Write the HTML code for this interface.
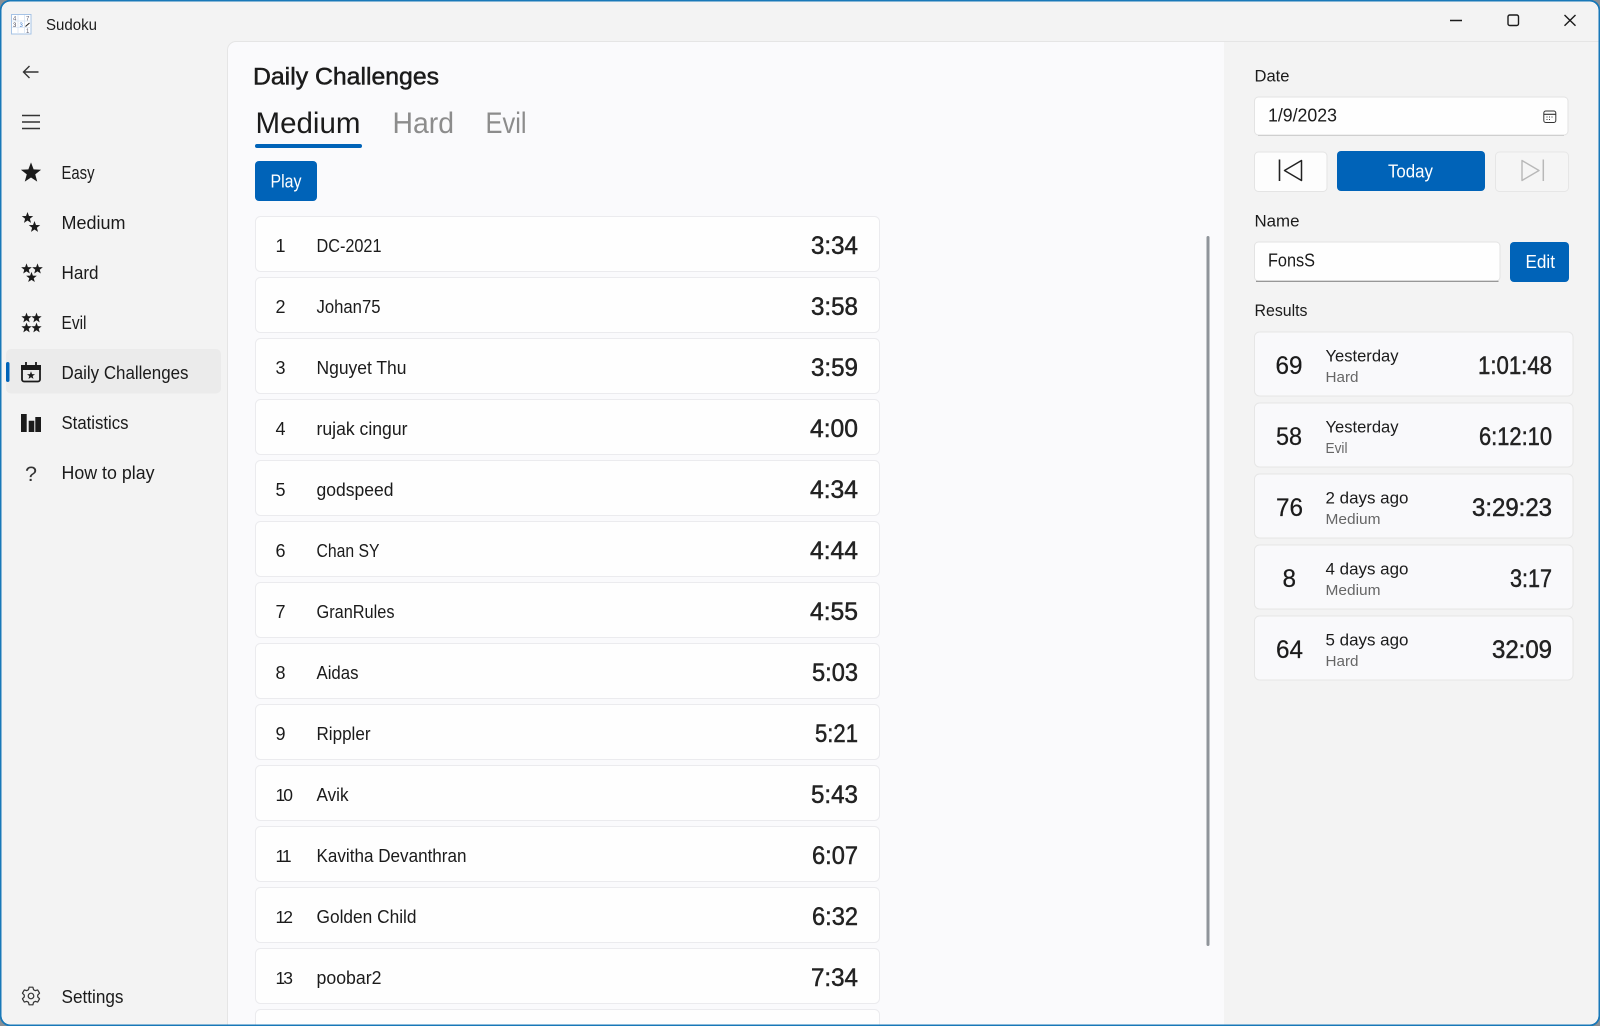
<!DOCTYPE html>
<html lang="en"><head><meta charset="utf-8"><title>Sudoku</title>
<style>
html,body{margin:0;padding:0;width:1600px;height:1026px;overflow:hidden;background:#8a8f94}
svg{display:block}
text{font-family:"Liberation Sans",sans-serif;fill:#1b1b1b;white-space:pre}
.n{font-size:18px}
.d{font-size:17.5px;letter-spacing:-2px}
.t{font-size:25px;fill:#222;stroke:#222;stroke-width:.5}
.h{font-size:25px;stroke:#1b1b1b;stroke-width:.25}
.s{font-size:17px}
.g{font-size:15px;fill:#666}
.w{fill:#fff}
.r{fill:#fefefe;stroke:#ebebee;stroke-width:1}
.c{fill:#f9f9fb;stroke:#e6e6e6;stroke-width:1}
</style></head><body>
<svg width="1600" height="1026" viewBox="0 0 1600 1026" xmlns="http://www.w3.org/2000/svg">
<defs>
<path id="st" d="M0-10L2.47-3.4 9.51-3.09 3.99 1.3 5.88 8.09 0 4.2-5.88 8.09-3.99 1.3-9.51-3.09-2.47-3.4Z"/>
<clipPath id="win"><rect x="1" y="1" width="1598" height="1024" rx="9"/></clipPath>
</defs>
<rect x="0.7" y="0.7" width="1598.6" height="1024.6" rx="9.5" fill="#f3f3f3" stroke="#1878b8" stroke-width="1.6"/>
<g clip-path="url(#win)">
<!-- content -->
<path d="M1224 41.5H236a8.5 8.5 0 0 0-8.5 8.5V1026H1224Z" fill="#fafafc"/>
<path d="M1600 41.5H236a8.5 8.5 0 0 0-8.5 8.5V1026" fill="none" stroke="#e5e5e5"/>
<!-- rows -->
<g>
<rect class="r" x="255.5" y="216.5" width="624" height="55" rx="5"/>
<rect class="r" x="255.5" y="277.5" width="624" height="55" rx="5"/>
<rect class="r" x="255.5" y="338.5" width="624" height="55" rx="5"/>
<rect class="r" x="255.5" y="399.5" width="624" height="55" rx="5"/>
<rect class="r" x="255.5" y="460.5" width="624" height="55" rx="5"/>
<rect class="r" x="255.5" y="521.5" width="624" height="55" rx="5"/>
<rect class="r" x="255.5" y="582.5" width="624" height="55" rx="5"/>
<rect class="r" x="255.5" y="643.5" width="624" height="55" rx="5"/>
<rect class="r" x="255.5" y="704.5" width="624" height="55" rx="5"/>
<rect class="r" x="255.5" y="765.5" width="624" height="55" rx="5"/>
<rect class="r" x="255.5" y="826.5" width="624" height="55" rx="5"/>
<rect class="r" x="255.5" y="887.5" width="624" height="55" rx="5"/>
<rect class="r" x="255.5" y="948.5" width="624" height="55" rx="5"/>
<rect class="r" x="255.5" y="1009.5" width="624" height="55" rx="5"/>
</g>
<g>
<text class="n" x="275.5" y="252">1</text><text class="n" x="316.5" y="252" textLength="65" lengthAdjust="spacingAndGlyphs">DC-2021</text>
<text class="n" x="275.5" y="313">2</text><text class="n" x="316.5" y="313" textLength="64" lengthAdjust="spacingAndGlyphs">Johan75</text>
<text class="n" x="275.5" y="374">3</text><text class="n" x="316.5" y="374" textLength="90" lengthAdjust="spacingAndGlyphs">Nguyet Thu</text>
<text class="n" x="275.5" y="435">4</text><text class="n" x="316.5" y="435" textLength="91" lengthAdjust="spacingAndGlyphs">rujak cingur</text>
<text class="n" x="275.5" y="496">5</text><text class="n" x="316.5" y="496" textLength="77" lengthAdjust="spacingAndGlyphs">godspeed</text>
<text class="n" x="275.5" y="557">6</text><text class="n" x="316.5" y="557" textLength="63" lengthAdjust="spacingAndGlyphs">Chan SY</text>
<text class="n" x="275.5" y="618">7</text><text class="n" x="316.5" y="618" textLength="78" lengthAdjust="spacingAndGlyphs">GranRules</text>
<text class="n" x="275.5" y="679">8</text><text class="n" x="316.5" y="679" textLength="42" lengthAdjust="spacingAndGlyphs">Aidas</text>
<text class="n" x="275.5" y="740">9</text><text class="n" x="316.5" y="740" textLength="54" lengthAdjust="spacingAndGlyphs">Rippler</text>
<text class="d" x="275.5" y="801">10</text><text class="n" x="316.5" y="801" textLength="32" lengthAdjust="spacingAndGlyphs">Avik</text>
<text class="d" x="275.5" y="862">11</text><text class="n" x="316.5" y="862" textLength="150" lengthAdjust="spacingAndGlyphs">Kavitha Devanthran</text>
<text class="d" x="275.5" y="923">12</text><text class="n" x="316.5" y="923" textLength="100" lengthAdjust="spacingAndGlyphs">Golden Child</text>
<text class="d" x="275.5" y="984">13</text><text class="n" x="316.5" y="984" textLength="65" lengthAdjust="spacingAndGlyphs">poobar2</text>
</g>
<g>
<text class="t" x="811" y="254" textLength="47" lengthAdjust="spacingAndGlyphs">3:34</text>
<text class="t" x="811" y="315" textLength="47" lengthAdjust="spacingAndGlyphs">3:58</text>
<text class="t" x="811" y="376" textLength="47" lengthAdjust="spacingAndGlyphs">3:59</text>
<text class="t" x="810" y="437" textLength="48" lengthAdjust="spacingAndGlyphs">4:00</text>
<text class="t" x="810" y="498" textLength="48" lengthAdjust="spacingAndGlyphs">4:34</text>
<text class="t" x="810" y="559" textLength="48" lengthAdjust="spacingAndGlyphs">4:44</text>
<text class="t" x="810" y="620" textLength="48" lengthAdjust="spacingAndGlyphs">4:55</text>
<text class="t" x="812" y="681" textLength="46" lengthAdjust="spacingAndGlyphs">5:03</text>
<text class="t" x="815" y="742" textLength="43" lengthAdjust="spacingAndGlyphs">5:21</text>
<text class="t" x="811" y="803" textLength="47" lengthAdjust="spacingAndGlyphs">5:43</text>
<text class="t" x="812" y="864" textLength="46" lengthAdjust="spacingAndGlyphs">6:07</text>
<text class="t" x="812" y="925" textLength="46" lengthAdjust="spacingAndGlyphs">6:32</text>
<text class="t" x="811" y="986" textLength="47" lengthAdjust="spacingAndGlyphs">7:34</text>
</g>
<!-- header -->
<text x="253" y="84.5" font-size="24" style="stroke:#1b1b1b;stroke-width:.5" textLength="186" lengthAdjust="spacingAndGlyphs">Daily Challenges</text>
<text x="255.5" y="133" font-size="30" textLength="105" lengthAdjust="spacingAndGlyphs">Medium</text>
<text x="392.5" y="133" font-size="30" style="fill:#8c8c8c" textLength="61.5" lengthAdjust="spacingAndGlyphs">Hard</text>
<text x="485.5" y="133" font-size="30" style="fill:#8c8c8c" textLength="41" lengthAdjust="spacingAndGlyphs">Evil</text>
<rect x="255" y="144" width="107" height="4" rx="2" fill="#0063b8"/>
<rect x="255" y="161" width="62" height="40" rx="4" fill="#0063b8"/>
<text class="n w" x="270.5" y="187.5" textLength="31" lengthAdjust="spacingAndGlyphs">Play</text>
<!-- scrollbar -->
<rect x="1206.5" y="236" width="3" height="710" rx="1.5" fill="#8f949a"/>
<!-- sidebar -->
<path d="M38.5 72H23.5M29.5 66L23.5 72L29.5 78" fill="none" stroke="#333" stroke-width="1.4"/>
<path d="M22 115.5H40M22 122H40M22 128.5H40" stroke="#333" stroke-width="1.4"/>
<use href="#st" transform="translate(31 173) scale(1.06)" fill="#1b1b1b"/>
<use href="#st" transform="translate(27.5 218) scale(.6)" fill="#1b1b1b"/>
<use href="#st" transform="translate(34.5 227) scale(.6)" fill="#1b1b1b"/>
<use href="#st" transform="translate(26.5 269) scale(.56)" fill="#1b1b1b"/>
<use href="#st" transform="translate(37.5 269) scale(.56)" fill="#1b1b1b"/>
<use href="#st" transform="translate(31.5 277.5) scale(.56)" fill="#1b1b1b"/>
<use href="#st" transform="translate(26.5 318) scale(.54)" fill="#1b1b1b"/>
<use href="#st" transform="translate(36.5 318) scale(.54)" fill="#1b1b1b"/>
<use href="#st" transform="translate(26.5 328) scale(.54)" fill="#1b1b1b"/>
<use href="#st" transform="translate(36.5 328) scale(.54)" fill="#1b1b1b"/>
<rect x="6" y="349" width="215" height="44.5" rx="5" fill="#ebebeb"/>
<rect x="6" y="362" width="3.5" height="20" rx="1.75" fill="#0063b8"/>
<rect x="22" y="366" width="18" height="15.5" rx="2" fill="none" stroke="#1b1b1b" stroke-width="1.8"/>
<rect x="21" y="365" width="20" height="5" fill="#1b1b1b"/>
<path d="M26 362V366M36 362V366" stroke="#1b1b1b" stroke-width="1.8"/>
<use href="#st" transform="translate(31 375.5) scale(.42)" fill="#1b1b1b"/>
<path d="M21 414h5.7v18H21ZM28.7 420.7h5.6V432h-5.6ZM35.300 417H41v15h-5.7Z" fill="#1b1b1b"/>
<text x="25" y="481" font-size="21" style="fill:#333" textLength="12" lengthAdjust="spacingAndGlyphs">?</text>
<g transform="translate(31 996)" fill="none" stroke="#333" stroke-width="1.2" stroke-linejoin="round">
<path d="M-2.55-6.3L-1.87-8.8 1.87-8.8 2.55-6.3 4.19-5.36 6.69-6.02 8.56-2.78 6.73-.95 6.73 .95 8.56 2.78 6.69 6.02 4.19 5.36 2.55 6.3 1.87 8.8-1.87 8.8-2.55 6.3-4.19 5.36-6.69 6.02-8.56 2.78-6.73 .95-6.73-.95-8.56-2.78-6.69-6.02-4.19-5.36Z"/>
<circle r="2.8"/>
</g>
<text class="n" x="61.5" y="179" textLength="33" lengthAdjust="spacingAndGlyphs">Easy</text>
<text class="n" x="61.5" y="229" textLength="64" lengthAdjust="spacingAndGlyphs">Medium</text>
<text class="n" x="61.5" y="279" textLength="37" lengthAdjust="spacingAndGlyphs">Hard</text>
<text class="n" x="61.5" y="329" textLength="25" lengthAdjust="spacingAndGlyphs">Evil</text>
<text class="n" x="61.5" y="379" textLength="127" lengthAdjust="spacingAndGlyphs">Daily Challenges</text>
<text class="n" x="61.5" y="429" textLength="67" lengthAdjust="spacingAndGlyphs">Statistics</text>
<text class="n" x="61.5" y="479" textLength="93" lengthAdjust="spacingAndGlyphs">How to play</text>
<text class="n" x="61.5" y="1003" textLength="62" lengthAdjust="spacingAndGlyphs">Settings</text>
<!-- title bar -->
<rect x="11.5" y="14.5" width="19.5" height="19.5" fill="#fff" stroke="#a6c3e6"/>
<path d="M18 15V34M24.5 15V34M12 21H31M12 27.5H31" stroke="#d9e5f4" stroke-width=".8"/>
<text x="13" y="20.5" font-size="6" style="fill:#667">4</text>
<text x="26" y="20.5" font-size="6" style="fill:#667">7</text>
<text x="13" y="27" font-size="6" style="fill:#445">3</text>
<text x="19.5" y="27" font-size="6" style="fill:#3f7fd0">3</text>
<path d="M25.5 26.5L29.5 23" stroke="#222" stroke-width="1"/>
<text x="26" y="33" font-size="6" style="fill:#667">1</text>
<text x="46" y="30" font-size="15.5" textLength="51" lengthAdjust="spacingAndGlyphs">Sudoku</text>
<path d="M1450 20.5H1462" stroke="#1b1b1b" stroke-width="1.4"/>
<rect x="1508" y="15" width="10.5" height="10.5" rx="1.8" fill="none" stroke="#1b1b1b" stroke-width="1.4"/>
<path d="M1564.5 15L1575.5 25.8M1575.5 15L1564.500 25.8" stroke="#1b1b1b" stroke-width="1.4"/>
<!-- right panel -->
<text class="s" x="1254.5" y="81.5" textLength="35" lengthAdjust="spacingAndGlyphs">Date</text>
<rect class="r" x="1254.5" y="97" width="313.5" height="38" rx="4" style="stroke:#e3e3e3"/>
<path d="M1258 135.5H1564" stroke="#cfcfcf"/>
<text class="n" x="1268" y="121.5" textLength="69" lengthAdjust="spacingAndGlyphs">1/9/2023</text>
<rect x="1543.8" y="111" width="12" height="11.5" rx="2" fill="none" stroke="#333" stroke-width="1"/>
<path d="M1544 114.3H1555.5" stroke="#333" stroke-width="1.2"/>
<path d="M1546.5 117h1M1549 117h1M1551.5 117h1M1546.5 119.5h1M1549 119.5h1" stroke="#333" stroke-width="1"/>
<rect x="1254.5" y="152" width="72.5" height="39.5" rx="4" fill="#fdfdfd" stroke="#e4e4e4"/>
<path d="M1279.5 159.5V181" stroke="#222" stroke-width="1.6"/>
<path d="M1301.5 160.5L1284.5 170.5L1301.5 180.5Z" fill="none" stroke="#222" stroke-width="1.5" stroke-linejoin="round"/>
<rect x="1337" y="151" width="148" height="40" rx="4" fill="#0063b8"/>
<text class="n w" x="1388" y="177.5" textLength="45" lengthAdjust="spacingAndGlyphs">Today</text>
<rect x="1495.5" y="152" width="73" height="39.5" rx="4" fill="#f5f5f5" stroke="#e6e6e6"/>
<path d="M1543.3 159.5V181" stroke="#b8b8b8" stroke-width="1.5"/>
<path d="M1522 160.5L1539 170.5L1522 180.5Z" fill="none" stroke="#b8b8b8" stroke-width="1.4" stroke-linejoin="round"/>
<text class="s" x="1254.5" y="226.5" textLength="45" lengthAdjust="spacingAndGlyphs">Name</text>
<rect class="r" x="1254.5" y="242" width="245.5" height="39" rx="4" style="stroke:#e3e3e3"/>
<path d="M1256 281.3H1498.5" stroke="#8a8a8a" stroke-width="1.2"/>
<text class="n" x="1268" y="266.5" textLength="47" lengthAdjust="spacingAndGlyphs">FonsS</text>
<rect x="1510" y="242" width="59" height="40" rx="4" fill="#0063b8"/>
<text class="n w" x="1525.5" y="268" textLength="29.5" lengthAdjust="spacingAndGlyphs">Edit</text>
<text class="s" x="1254.5" y="316" textLength="53" lengthAdjust="spacingAndGlyphs">Results</text>
<!-- results -->
<rect class="c" x="1254.5" y="332" width="318.5" height="64" rx="5"/>
<rect class="c" x="1254.5" y="403" width="318.5" height="64" rx="5"/>
<rect class="c" x="1254.5" y="474" width="318.5" height="64" rx="5"/>
<rect class="c" x="1254.5" y="545" width="318.5" height="64" rx="5"/>
<rect class="c" x="1254.5" y="616" width="318.5" height="64" rx="5"/>
<text class="h" x="1275.5" y="374" textLength="27" lengthAdjust="spacingAndGlyphs">69</text>
<text class="h" x="1276" y="445" textLength="26" lengthAdjust="spacingAndGlyphs">58</text>
<text class="h" x="1276" y="516" textLength="27" lengthAdjust="spacingAndGlyphs">76</text>
<text class="h" x="1282.5" y="587" textLength="13.5" lengthAdjust="spacingAndGlyphs">8</text>
<text class="h" x="1276" y="658" textLength="27" lengthAdjust="spacingAndGlyphs">64</text>
<text class="s" x="1325.5" y="361.5" textLength="73" lengthAdjust="spacingAndGlyphs">Yesterday</text>
<text class="s" x="1325.5" y="432.5" textLength="73" lengthAdjust="spacingAndGlyphs">Yesterday</text>
<text class="s" x="1325.5" y="503.5" textLength="83" lengthAdjust="spacingAndGlyphs">2 days ago</text>
<text class="s" x="1325.5" y="574.5" textLength="83" lengthAdjust="spacingAndGlyphs">4 days ago</text>
<text class="s" x="1325.5" y="645.5" textLength="83" lengthAdjust="spacingAndGlyphs">5 days ago</text>
<text class="g" x="1325.5" y="382" textLength="33" lengthAdjust="spacingAndGlyphs">Hard</text>
<text class="g" x="1325.5" y="453" textLength="22" lengthAdjust="spacingAndGlyphs">Evil</text>
<text class="g" x="1325.5" y="524" textLength="55" lengthAdjust="spacingAndGlyphs">Medium</text>
<text class="g" x="1325.5" y="595" textLength="55" lengthAdjust="spacingAndGlyphs">Medium</text>
<text class="g" x="1325.5" y="666" textLength="33" lengthAdjust="spacingAndGlyphs">Hard</text>
<text class="t" x="1478" y="374" textLength="74" lengthAdjust="spacingAndGlyphs">1:01:48</text>
<text class="t" x="1479" y="445" textLength="73" lengthAdjust="spacingAndGlyphs">6:12:10</text>
<text class="t" x="1472" y="516" textLength="80" lengthAdjust="spacingAndGlyphs">3:29:23</text>
<text class="t" x="1510" y="587" textLength="42" lengthAdjust="spacingAndGlyphs">3:17</text>
<text class="t" x="1492" y="658" textLength="60" lengthAdjust="spacingAndGlyphs">32:09</text>
</g>
<rect x="0.7" y="0.7" width="1598.6" height="1024.6" rx="9.5" fill="none" stroke="#1878b8" stroke-width="1.6"/>
</svg>
</body></html>
